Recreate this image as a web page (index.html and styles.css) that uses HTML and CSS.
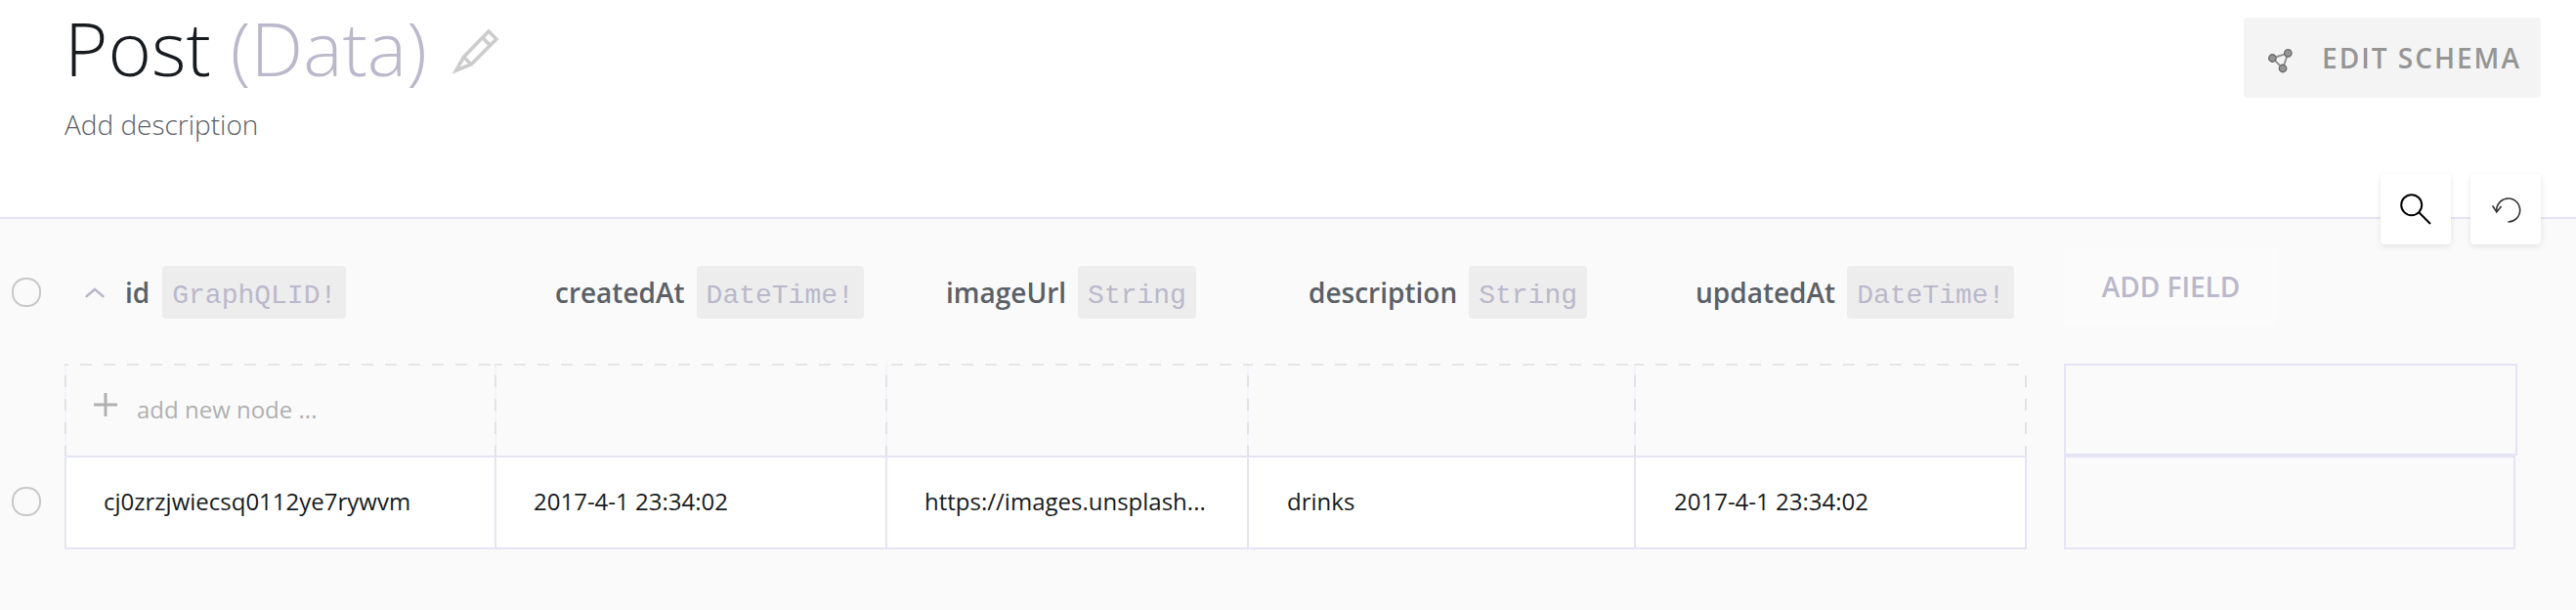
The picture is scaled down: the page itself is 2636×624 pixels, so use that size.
FILE: index.html
```html
<!DOCTYPE html>
<html lang="en">
<head>
<meta charset="utf-8">
<title>Post (Data)</title>
<link rel="stylesheet" href="styles.css">
</head>
<body>
<header class="header">
  <div class="heading">
    <h1 class="title"><span class="name">Post</span><span class="kind">(Data)</span>
      <svg class="pencil" width="50" height="50" viewBox="0 0 50 50" fill="none" stroke="#ccc" stroke-width="3.6"><path d="M4.8 44 12.6 30.2 38 4 46 12 20.4 37.6ZM12.6 30.2 20.4 38M31.5 10 39.5 18.5"/></svg>
    </h1>
    <p class="description">Add description</p>
  </div>
  <div class="actions">
    <button class="schema">
      <svg width="26" height="26" viewBox="0 0 26 26" stroke="#6c6c6c" stroke-width="1.4"><path d="M4.4 10.5 20.3 5.3 15 21Z" fill="none" stroke="#959595" stroke-width="2"/><g fill="#949494"><circle cx="4.4" cy="10.5" r="3.7"/><circle cx="20.3" cy="5.3" r="3.7"/><circle cx="15" cy="21" r="3.7"/></g></svg>
      <span>EDIT SCHEMA</span>
    </button>
    <div class="tools">
      <button class="tool"><svg width="36" height="36" viewBox="0 0 36 36" fill="none" stroke="#000" stroke-width="2"><circle cx="13.7" cy="13.7" r="10.5"/><path d="M21 21 33 33"/></svg></button>
      <button class="tool"><svg width="36" height="36" viewBox="0 0 36 36" fill="none" stroke="#333" stroke-width="1.6"><path d="M8.7 20.5V18.7A12 12 0 1 1 20.4 31M4.6 14.5 8.8 21 13.6 15"/></svg></button>
    </div>
  </div>
</header>
<main class="data">
  <div class="selectors">
    <i class="check"></i>
    <i class="check"></i>
  </div>
  <div class="table">
    <div class="row heads">
      <div class="head first"><svg class="sort" width="20" height="11" viewBox="0 0 20 11" fill="none" stroke="#bab8ca" stroke-width="2.6" stroke-linecap="round"><path d="M1.6 9 10 2 18.4 9"/></svg><b>id</b><code>GraphQLID!</code></div>
      <div class="head"><b>createdAt</b><code>DateTime!</code></div>
      <div class="head"><b>imageUrl</b><code>String</code></div>
      <div class="head wide"><b>description</b><code>String</code></div>
      <div class="head wide"><b>updatedAt</b><code>DateTime!</code></div>
    </div>
    <div class="row new">
      <div class="slot dash-1"><svg class="plus" width="24" height="24" viewBox="0 0 24 24" stroke="#b0b0b0" stroke-width="3"><path d="M0 12H24M12 0V24"/></svg><span>add new node ...</span></div>
      <div class="slot dash-2"></div>
      <div class="slot dash-3"></div>
      <div class="slot dash-4"></div>
      <div class="slot dash-5"></div>
    </div>
    <div class="row values">
      <div class="cell">cj0zrzjwiecsq0112ye7rywvm</div>
      <div class="cell">2017-4-1 23:34:02</div>
      <div class="cell">https://images.unsplash...</div>
      <div class="cell wide">drinks</div>
      <div class="cell wide">2017-4-1 23:34:02</div>
    </div>
  </div>
  <div class="extra">
    <button class="add-field">ADD FIELD</button>
    <div class="box top"></div>
    <div class="box bottom"></div>
  </div>
</main>
</body>
</html>
```
FILE: styles.css
```css
* { box-sizing: border-box; }
body { margin: 0; width: 2636px; height: 624px; overflow: hidden; background: #fafafa; font-family: "Open Sans", sans-serif; color: #171b20; }
button { border: 0; padding: 0; font: inherit; }
svg { display: block; flex: none; }

.header { height: 224px; display: flex; justify-content: space-between; padding: 0 36px 0 66px; background: #fff; border-bottom: 2px solid #e5e4f4; }
.title { display: flex; height: 97px; margin: 0; font-size: 76px; line-height: 97px; font-weight: 300; white-space: nowrap; }
.kind { margin-left: 20px; color: #bab8ca; }
.pencil { margin: 28px 0 0 25px; }
.description { margin: 11px 0 0; font-size: 28px; line-height: 38px; font-weight: 300; color: #5b6067; }

.actions { display: flex; flex-direction: column; align-items: flex-end; gap: 78px; padding-top: 18px; }
.schema { display: flex; flex: none; width: 304px; height: 82px; padding: 0 0 0 25px; gap: 29px; align-items: center; border-radius: 4px; background: #f4f4f4; color: #959595; font-size: 28px; font-weight: 600; letter-spacing: 2px; white-space: nowrap; }
.schema svg { margin-top: 6px; }
.tools { display: flex; flex: none; gap: 20px; position: relative; }
.tool { display: flex; width: 72px; height: 72px; align-items: center; justify-content: center; border-radius: 4px; background: #fff; box-shadow: 0 2px 6px rgba(0, 0, 0, .1); }

.data { display: flex; }
.selectors { display: flex; flex-direction: column; width: 66px; padding: 60px 0 0 12px; gap: 184px; }
.check { width: 30px; height: 30px; border: 2px solid #c8c8c8; border-radius: 14px; }
.table { width: 2008px; }
.row { display: grid; grid-template-columns: 440px 400px 370px 396px 402px; }
.heads { height: 148px; padding-top: 48px; }
.head { display: flex; height: 54px; align-items: center; padding-left: 62px; font-size: 28px; white-space: nowrap; }
.head.first { padding-left: 21px; }
.head.wide { padding-left: 63px; }
.head b { font-weight: 600; color: #5b6067; }
.head code { margin-left: 12px; height: 54px; padding: 0 10px; border-radius: 4px; background: #ededed; color: #bab8ca; font: 28px/62px "Courier New", "Liberation Mono", monospace; }
.head.first code { margin-left: 13px; }
.sort { margin-right: 21px; }
.new { height: 94px; }
.slot {
  display: flex; align-items: center; padding-left: 30px;
  background-image: linear-gradient(90deg, #e6e6e6 50%, transparent 50%), linear-gradient(#e3e2e8 50%, transparent 50%), linear-gradient(#f4f3fa, #f4f3fa);
  background-size: 24px 2px, 2px 24px, 2px 100%;
  background-position: var(--dash) 0, 0 12px, 0 0;
  background-repeat: repeat-x, repeat-y, no-repeat;
}
.dash-1 { --dash: 16px; }
.dash-2 { --dash: 20px; }
.dash-3 { --dash: 6px; }
.dash-4 { --dash: 18px; }
.dash-5 {
  --dash: 22px;
  background-image: linear-gradient(90deg, #e6e6e6 50%, transparent 50%), linear-gradient(#e3e2e8 50%, transparent 50%), linear-gradient(#f4f3fa, #f4f3fa), linear-gradient(#e3e2e8 50%, transparent 50%);
  background-size: 24px 2px, 2px 24px, 2px 100%, 2px 24px;
  background-position: var(--dash) 0, 0 12px, 0 0, 100% 12px;
  background-repeat: repeat-x, repeat-y, no-repeat, repeat-y;
}
.slot span { margin: -2px 0 0 20px; font-size: 24px; color: #b0b0b0; }
.plus { margin-bottom: 10px; }
.values { height: 96px; background: #fff; border: solid #e5e4f4; border-width: 2px 2px 2px 0; }
.cell { border-left: 2px solid #e5e4f4; padding-left: 38px; font-size: 24px; line-height: 90px; white-space: nowrap; }
.cell.wide { padding-left: 39px; }

.extra { margin-left: 38px; width: 464px; }
.add-field { display: block; width: 218px; height: 78px; margin: 30px 0 40px; padding-left: 1px; border-radius: 4px; background: #fbfbfb; color: #bab8ca; font-size: 28px; font-weight: 600; line-height: 79px; }
.box { border: 2px solid #e5e4f4; }
.top { height: 94px; }
.bottom { width: 462px; height: 96px; }
```
